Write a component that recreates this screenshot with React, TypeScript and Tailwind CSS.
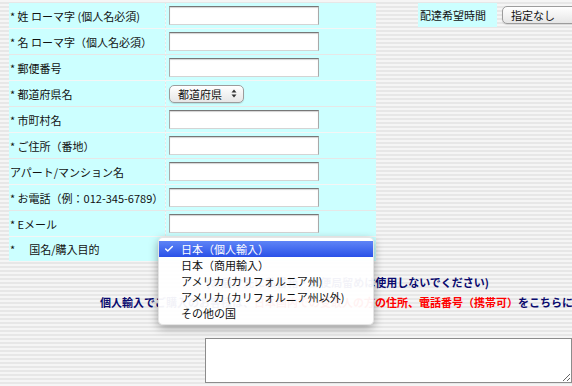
import { Check } from "lucide-react";

const rows: { label: string; kind: "text" | "select" | "country"; h: string }[] = [
  { label: "* 姓 ローマ字 (個人名必須)", kind: "text", h: "h-[25px]" },
  { label: "* 名 ローマ字（個人名必須）", kind: "text", h: "h-[25px]" },
  { label: "* 郵便番号", kind: "text", h: "h-[25px]" },
  { label: "* 都道府県名", kind: "select", h: "h-[25px]" },
  { label: "* 市町村名", kind: "text", h: "h-[25px]" },
  { label: "* ご住所（番地）", kind: "text", h: "h-[25px]" },
  { label: "アパート/マンション名", kind: "text", h: "h-[25px]" },
  { label: "* お電話（例：012-345-6789）", kind: "text", h: "h-[25px]" },
  { label: "* Eメール", kind: "text", h: "h-[25px]" },
  { label: "country", kind: "country", h: "h-[24px]" },
];

const countries = [
  "日本（個人輸入）",
  "日本（商用輸入）",
  "アメリカ (カリフォルニア州)",
  "アメリカ (カリフォルニア州以外)",
  "その他の国",
];

function TextBox() {
  return (
    <input
      type="text"
      className="block w-[150px] h-[19px] bg-white border border-[#a9a9a9] border-t-[#777] border-b-[#d4d4d4] shadow-[inset_0_1px_1px_rgba(0,0,0,0.18)] outline-none"
    />
  );
}

function Arrows() {
  return (
    <svg width="6" height="9" viewBox="0 0 6 9" className="text-[#333]">
      <path d="M3 0.5 L5.5 3.5 H0.5 Z" fill="currentColor" />
      <path d="M3 8.5 L5.5 5.5 H0.5 Z" fill="currentColor" />
    </svg>
  );
}

function SelectBox({ text, width }: { text: string; width: string }) {
  return (
    <div
      className={`flex items-center justify-between h-[18px] ${width} pl-[8px] pr-[6px] rounded-[5px] border border-[#9c9c9c] bg-gradient-to-b from-white to-[#e6e6e6] shadow-[0_1px_1px_rgba(0,0,0,0.12)] text-[11px] text-[#111]`}
    >
      <span>{text}</span>
      <Arrows />
    </div>
  );
}

export default function App() {
  return (
    <div className="relative w-[572px] h-[386px] overflow-hidden bg-[repeating-linear-gradient(to_bottom,#f5f5f5_0px,#f5f5f5_2px,#e7e7e7_2px,#e7e7e7_4px)] font-['Noto_Sans_CJK_JP','Noto_Sans',sans-serif] text-[11px] leading-[14px] text-[#111]">
      <div className="flex items-start pt-[3px] pl-[9px]">
        {/* form table */}
        <div className="grid grid-cols-[156px_210px] gap-px">
          {rows.map((r, i) => (
            <div key={i} className="contents">
              <div className={`${r.h} flex items-center pl-px bg-[#ccffff] whitespace-nowrap`}>
                {r.kind === "country" ? (
                  <>
                    <span>*</span>
                    <span className="ml-[14px]">国名/購入目的</span>
                  </>
                ) : (
                  r.label
                )}
              </div>
              <div className={`${r.h} flex items-center pl-[3px] bg-[#ccffff]`}>
                {r.kind === "text" && <TextBox />}
                {r.kind === "select" && <SelectBox text="都道府県" width="w-[75px]" />}
              </div>
            </div>
          ))}
        </div>

        {/* delivery time */}
        <div className="ml-[42px] grid grid-cols-[79px_120px] gap-px">
          <div className="h-[24px] flex items-center pl-[2px] bg-[#ccffff] whitespace-nowrap">配達希望時間</div>
          <div className="h-[24px] flex items-center pl-[4px]">
            <SelectBox text="指定なし" width="w-[100px]" />
          </div>
        </div>
      </div>

      {/* notes */}
      <div className="mt-[14px] pl-[206px] whitespace-nowrap font-bold text-[#0a0a6e]">
        (お届け先に私書箱・郵便局留めは使用しないでください)
      </div>
      <div className="mt-[6px] pl-[100px] whitespace-nowrap font-bold text-[#0a0a6e]">
        個人輸入でご購入のお客様は、<span className="text-[#ff0000]">日本国内での受取人の方の住所、電話番号（携帯可）</span>をこちらにご記入ください
      </div>

      <div className="mt-[29px] pl-[205px]">
        <textarea className="block w-[367px] h-[45px] bg-white border border-[#8c8c8c] outline-none resize" />
      </div>

      {/* open country menu */}
      <div className="absolute left-[158px] top-[237px] w-[216px] py-[3px] rounded-[5px] bg-white/95 shadow-[0_3px_10px_rgba(0,0,0,0.35)] border border-black/10">
        {countries.map((c, i) => (
          <div
            key={c}
            className={`relative h-[16px] flex items-center pl-[22px] whitespace-nowrap ${
              i === 0 ? "bg-gradient-to-b from-[#5f84f6] to-[#2a50e8] text-white" : "text-[#111]"
            }`}
          >
            {i === 0 && <Check className="absolute left-[5px] top-[3px] w-[10px] h-[10px]" strokeWidth={3.5} />}
            {c}
          </div>
        ))}
      </div>
    </div>
  );
}
